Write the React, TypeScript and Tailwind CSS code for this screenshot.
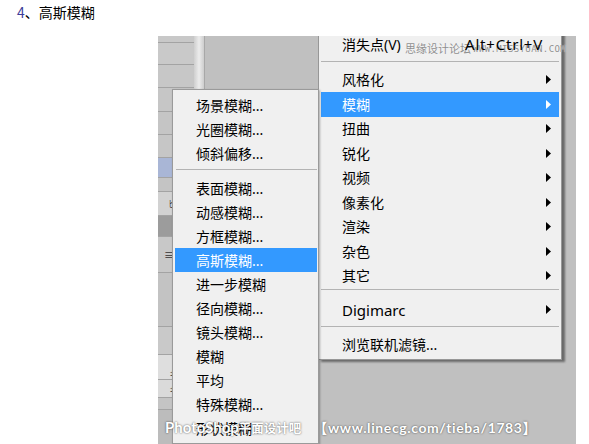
import React from 'react';

const mainItems = ['风格化', '模糊', '扭曲', '锐化', '视频', '像素化', '渲染', '杂色', '其它'];
const subTop = ['场景模糊...', '光圈模糊...', '倾斜偏移...'];
const subBottom = [
  '表面模糊...',
  '动感模糊...',
  '方框模糊...',
  '高斯模糊...',
  '进一步模糊',
  '径向模糊...',
  '镜头模糊...',
  '模糊',
  '平均',
  '特殊模糊...',
  '形状模糊...',
];

const Arrow: React.FC<{ light?: boolean }> = ({ light }) => (
  <svg width="5" height="9" viewBox="0 0 5 9" className={light ? 'text-white' : 'text-black'}>
    <polygon points="0,0 5,4.5 0,9" fill="currentColor" />
  </svg>
);

// strip of the layers panel that peeks out on the left
const StripBand: React.FC<{ h: string; bg: string; children?: React.ReactNode }> = ({ h, bg, children }) => (
  <div className={`${h} ${bg} border-b border-[#a3a3a3] flex items-center pl-[4px] text-[9px] leading-none text-[#333]`}>
    {children}
  </div>
);

const App: React.FC = () => {
  return (
    <div className="w-[589px] h-[444px] bg-white overflow-hidden font-['Noto_Sans','Noto_Sans_CJK_SC',sans-serif]">
      <p className="pl-[17px] pt-[2px] text-[14px] leading-[20px] text-black font-['Noto_Sans_CJK_SC',sans-serif]">
        <span className="text-[#3d3d99]">4</span>、高斯模糊
      </p>

      <div className="relative ml-[158px] mt-[14px] w-[418px] h-[408px] bg-[#c0c0c0] overflow-hidden flex">
        {/* left panel strip */}
        <div className="w-[36px] flex flex-col bg-[#c6c6c6]">
          <StripBand h="h-[7px]" bg="bg-[#c8c8c8]" />
          <StripBand h="h-[22px]" bg="bg-[#c9c9c9]" />
          <StripBand h="h-[23px]" bg="bg-[#c7c7c7]" />
          <StripBand h="h-[24px]" bg="bg-[#c6c6c6]" />
          <StripBand h="h-[23px]" bg="bg-[#c5c5c5]" />
          <StripBand h="h-[23px]" bg="bg-[#c6c6c6]" />
          <StripBand h="h-[20px]" bg="bg-[#a9b6d6]" />
          <StripBand h="h-[14px]" bg="bg-[#c4c4c4]" />
          <StripBand h="h-[24px]" bg="bg-[#d2d2d2]">
            <span className="ml-[7px]">ﾋ</span>
          </StripBand>
          <StripBand h="h-[21px]" bg="bg-[#9c9c9c]" />
          <StripBand h="h-[36px]" bg="bg-[#c8c8c8]">
            <span className="ml-[2px] text-[10px]">≡</span>
          </StripBand>
          <StripBand h="h-[54px]" bg="bg-[#c3c3c3]" />
          <StripBand h="h-[28px]" bg="bg-[#c9c9c9]" />
          <StripBand h="h-[25px]" bg="bg-[#dedede]">
            <span className="ml-[8px] mt-[10px]">±</span>
          </StripBand>
          <StripBand h="h-[18px]" bg="bg-[#dadada]">
            <span className="ml-[8px]">±</span>
          </StripBand>
          <StripBand h="h-[12px]" bg="bg-[#c4c4c4]" />
          <div className="flex-1 bg-[#bcbcbc]" />
        </div>
        {/* scrollbar */}
        <div className="w-[11px] bg-gradient-to-r from-[#cfcfcf] via-[#ececec] to-[#cdcdcd] border-r border-[#a8a8a8]" />
        <div className="flex-1" />

        {/* main filter menu */}
        <div className="absolute left-[160px] top-[-7px] w-[244px] bg-[#f0f0f0] border border-[#979797] pt-[2px] pb-[2px] pl-[2px] pr-[2px] shadow-[3px_2px_2px_rgba(0,0,0,0.45)] text-[14px] text-black">
          <div className="h-[24px] flex items-center pl-[21px] pr-[16px]">
            <span className="flex-1 relative z-10">消失点(V)</span>
            <span className="relative z-10 text-[15px] tracking-[0.8px]">Alt+Ctrl+V</span>
          </div>
          <div className="h-[11.5px] flex items-center">
            <div className="w-full h-px bg-[#b3b3b3]" />
          </div>
          {mainItems.map((item) => {
            const active = item === '模糊';
            return (
              <div
                key={item}
                className={`h-[24.5px] flex items-center pl-[21px] pr-[8px] ${active ? 'bg-[#3399ff] text-white' : ''}`}
              >
                <span className="flex-1">{item}</span>
                <Arrow light={active} />
              </div>
            );
          })}
          <div className="h-[9.5px] pt-[1px]">
            <div className="w-full h-px bg-[#b3b3b3]" />
          </div>
          <div className="h-[24.5px] flex items-center pl-[21px] pr-[8px]">
            <span className="flex-1 text-[15px]">Digimarc</span>
            <Arrow />
          </div>
          <div className="h-[10px] pt-[3.5px]">
            <div className="w-full h-px bg-[#b3b3b3]" />
          </div>
          <div className="h-[24.5px] flex items-center pl-[21px]">浏览联机滤镜...</div>
        </div>

        {/* blur submenu */}
        <div className="absolute left-[14px] top-[53px] w-[147px] bg-[#f0f0f0] border border-[#9a9a9a] pt-[3px] pb-[3px] pl-[2px] pr-[1px] shadow-[1px_1px_2px_rgba(0,0,0,0.3)] text-[14px] text-black">
          {subTop.map((item) => (
            <div key={item} className="h-[24px] flex items-center pl-[21px]">
              {item}
            </div>
          ))}
          <div className="h-[11px] pt-[4px] pl-[1px]">
            <div className="w-full h-px bg-[#b3b3b3]" />
          </div>
          {subBottom.map((item) => (
            <div
              key={item}
              className={`h-[24px] flex items-center pl-[21px] ${item === '高斯模糊...' ? 'bg-[#3399ff] text-white' : ''}`}
            >
              {item}
            </div>
          ))}
        </div>

        {/* watermarks */}
        <div className="absolute z-[5] left-[247px] top-[6px] flex items-end gap-[2px] text-[#8f8f8f] [text-shadow:0_0_1px_#fff] pointer-events-none">
          <span className="text-[11px] leading-[13px] font-['Noto_Sans_CJK_SC',sans-serif]">思缘设计论坛</span>
          <span className="text-[9px] leading-[11px] tracking-[0.4px] font-['DejaVu_Sans_Mono',monospace]">WWW.MISSYUAN.COM</span>
        </div>
        <div className="absolute z-20 left-[7px] top-[382px] flex items-center gap-[12px] text-white font-bold [text-shadow:0_0_2px_rgba(0,0,0,0.7)] pointer-events-none">
          <span className="text-[15px] leading-[18px] font-['Lato','Noto_Sans_CJK_SC',sans-serif]">
            PhotoShop<span className="text-[12.5px]">平面设计吧</span>
          </span>
          <span className="text-[14px] leading-[18px] tracking-[0.6px] font-['Lato','Noto_Sans_CJK_SC',sans-serif]">【www.linecg.com/tieba/1783】</span>
        </div>
      </div>
    </div>
  );
};

export default App;
